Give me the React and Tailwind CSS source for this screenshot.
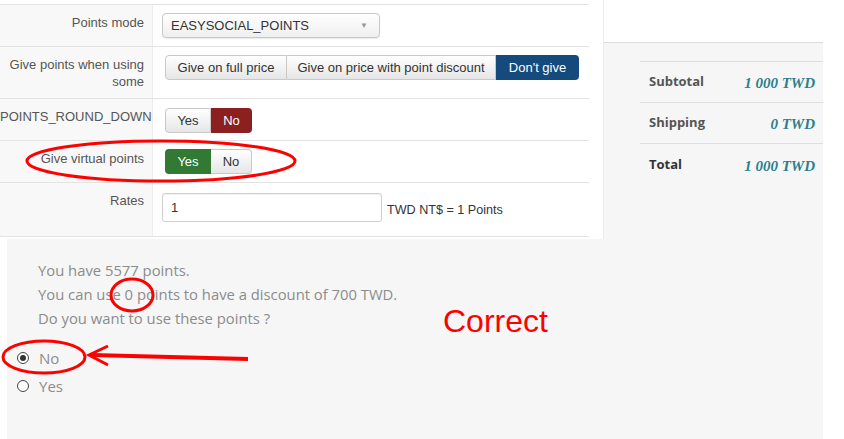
import React from 'react';

const labelCls = 'w-[153px] shrink-0 bg-[#f8f8f8] border-r border-[#ececec] pt-[9px] pr-[8px] text-right text-[13px] leading-[17px] text-[#555]';
const btnBase = 'h-[25px] flex items-center justify-center whitespace-nowrap text-[13px]';
const btnIdle = 'border border-[#c8c8c8] bg-gradient-to-b from-white to-[#e6e6e6] text-[#333]';

const Row = ({ label, h, children }) => (
  <div className={`flex border-b border-[#e3e3e3] ${h}`}>
    <div className={labelCls}>{label}</div>
    <div className="flex-1 pl-[9px] pt-[8px]">{children}</div>
  </div>
);

const Toggle = ({ active, color }) => (
  <div className="ml-[3px] flex">
    <div className={`w-[46px] rounded-l-[4px] ${btnBase} ${active === 'yes' ? color + ' text-white' : btnIdle}`}>Yes</div>
    <div className={`w-[41px] rounded-r-[4px] ${btnBase} ${active === 'no' ? color + ' text-white' : btnIdle + ' border-l-0'}`}>No</div>
  </div>
);

const Summary = ({ label, value, dark }) => (
  <div className="flex h-[41px] items-center justify-between border-b border-[#dedede] pl-[9px] pr-[8px] last:border-b-0">
    <span className={`text-[13px] font-bold ${dark ? 'text-[#333]' : 'text-[#555]'}`} style={{ fontFamily: '"Open Sans", sans-serif' }}>{label}</span>
    <span className="mt-[3px] text-[15px] font-bold italic text-[#2b7f8e]" style={{ fontFamily: '"Liberation Serif", serif' }}>{value}</span>
  </div>
);

export default function App() {
  return (
    <div className="relative w-[844px] h-[439px] overflow-hidden bg-white flex flex-col" style={{ fontFamily: '"Liberation Sans", Arial, sans-serif' }}>
      <div className="flex h-[239px]">
        {/* settings form */}
        <div className="w-[604px] pt-[4px] pr-[14px] bg-white border-r border-[#ececec]">
          <div className="border-t border-[#e3e3e3]">
            <Row label="Points mode" h="h-[42px]">
              <div className="relative flex h-[25px] w-[218px] items-center rounded-[4px] border border-[#c8c8c8] bg-gradient-to-b from-white to-[#efefef] pl-[8px] text-[13px] text-[#333] shadow-[0_1px_1px_rgba(0,0,0,0.08)]">
                EASYSOCIAL_POINTS
                <span className="absolute right-[11px] top-[6px] text-[8px] text-[#999]">▼</span>
              </div>
            </Row>
            <Row label={<>Give points when using<br />some</>} h="h-[52px]">
              <div className="ml-[3px] flex">
                <div className={`w-[122px] rounded-l-[4px] ${btnBase} ${btnIdle}`}>Give on full price</div>
                <div className={`w-[209px] border-l-0 ${btnBase} ${btnIdle}`}>Give on price with point discount</div>
                <div className={`w-[83px] rounded-r-[4px] bg-[#154a7c] text-white ${btnBase}`}>Don't give</div>
              </div>
            </Row>
            <Row label="POINTS_ROUND_DOWN" h="h-[42px]">
              <div className="pt-[1px]"><Toggle active="no" color="bg-[#8c1f1f]" /></div>
            </Row>
            <Row label="Give virtual points" h="h-[42px]">
              <Toggle active="yes" color="bg-[#327a33]" />
            </Row>
            <Row label="Rates" h="h-[54px]">
              <div className="mt-[2px] flex items-center">
                <div className="flex h-[29px] w-[220px] items-center rounded-[3px] border border-[#cfcfcf] bg-white pl-[8px] text-[13px] text-[#333] shadow-[inset_0_1px_1px_rgba(0,0,0,0.06)]">1</div>
                <span className="ml-[5px] mt-[5px] text-[12.6px] text-[#333]">TWD NT$ = 1 Points</span>
              </div>
            </Row>
          </div>
        </div>
        {/* order summary */}
        <div className="mt-[42px] w-[219px] border-t border-[#dcdcdc] bg-[#f6f6f6] pt-[18px]">
          <div className="ml-[36px] border-t border-[#dedede]">
            <Summary label="Subtotal" value="1 000 TWD" />
            <Summary label="Shipping" value="0 TWD" />
            <Summary label="Total" value="1 000 TWD" dark />
          </div>
        </div>
      </div>

      {/* points usage */}
      <div className="ml-[7px] w-[816px] flex-1 bg-[#f6f6f6] pt-[19px] text-[#8c8c8c]" style={{ fontFamily: '"Open Sans", sans-serif' }}>
        <div className="pl-[31px] text-[14.8px] leading-[24px]">
          <p>You have 5577 points.</p>
          <p>You can use 0 points to have a discount of 700 TWD.</p>
          <p>Do you want to use these points ?</p>
        </div>
        <div className="mt-[14px] pl-[10px] text-[15px] leading-[28px]">
          <label className="flex items-center gap-[10px]">
            <span className="flex h-[12px] w-[12px] items-center justify-center rounded-full border border-[#444] bg-white">
              <span className="h-[6px] w-[6px] rounded-full bg-[#333]" />
            </span>
            No
          </label>
          <label className="flex items-center gap-[10px]">
            <span className="h-[12px] w-[12px] rounded-full border border-[#444] bg-white" />
            Yes
          </label>
        </div>
      </div>

      {/* annotations */}
      <svg className="pointer-events-none absolute left-0 top-0" width="844" height="439" viewBox="0 0 844 439">
        <ellipse cx="161" cy="161" rx="134" ry="20" fill="none" stroke="#f00" strokeWidth="3" />
        <ellipse cx="132" cy="295" rx="21" ry="16" fill="none" stroke="#f00" strokeWidth="3" />
        <ellipse cx="44" cy="357" rx="41" ry="16" fill="none" stroke="#f00" strokeWidth="3" />
        <path d="M248 359 L92 355" stroke="#f00" strokeWidth="4" fill="none" />
        <path d="M108 346 L89 355 L108 365" stroke="#f00" strokeWidth="3" fill="none" strokeLinejoin="miter" />
      </svg>
      <span className="absolute left-[443px] top-[305px] text-[32px] leading-none text-[#f00]">Correct</span>
    </div>
  );
}
